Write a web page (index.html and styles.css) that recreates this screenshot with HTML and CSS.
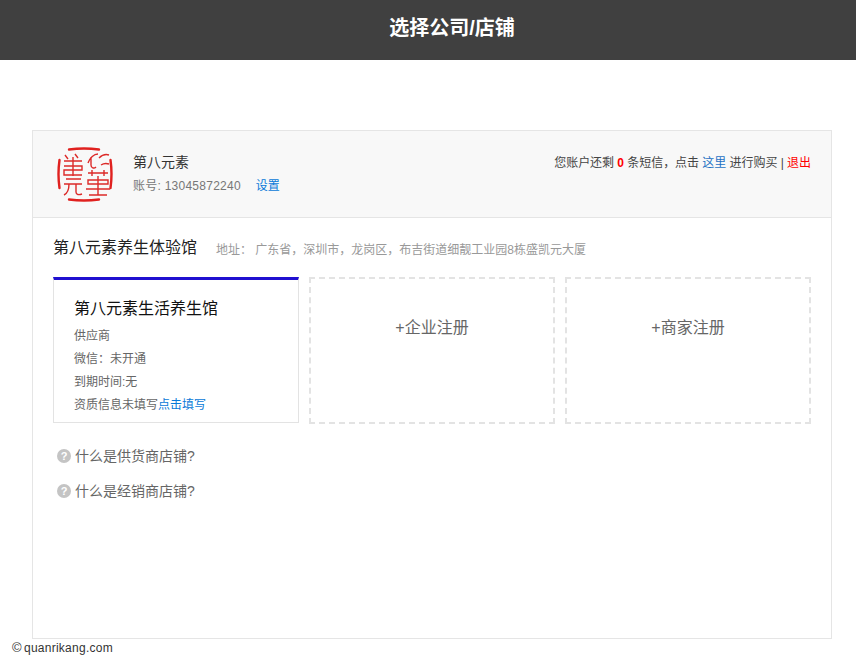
FILE: index.html
```html
<!DOCTYPE html>
<html lang="zh-CN">
<head>
<meta charset="utf-8">
<title>选择公司/店铺</title>
<link rel="stylesheet" href="styles.css">
</head>
<body>
<header class="topbar"><h1 class="topbar-title">选择公司/店铺</h1></header>
<main class="panel">
  <section class="account">
    <svg class="seal" viewBox="0 0 64 64" width="64" height="64" aria-hidden="true">
      <path class="seal-rim" d="M17 7.5Q32 5.5 47 7.5M7.5 18Q5.5 32 7.5 46M58.5 18Q60.5 32 58.5 46M17 57.5Q32 59.5 47 57.5"/>
      <path class="seal-mark" d="M13 13l3 4M23 12l3 4M12 19h18M12 24h18v4H12v5h18M21 15v19"/>
      <path class="seal-mark" d="M14 37h15M12 42h18M17 42c0 5-1 9-5 11M24 42v8c0 3 3 3 6 2"/>
      <path class="seal-mark" d="M36 21c2-5 6-9 10-9M39 15v8c0 3 3 4 5 2M47 16c3-3 7-4 10-3M49 23c3-2 5-2 8-1"/>
      <path class="seal-mark" d="M36 31h20M40 28v6M52 28v6M36 38h20v4H36zM34 47h24M46 34v19M37 53h18"/>
    </svg>
    <div class="account-info">
      <div class="account-name">第八元素</div>
      <div class="account-id">账号: 13045872240<a class="settings-link" href="#">设置</a></div>
    </div>
    <p class="sms-note">您账户还剩 <b class="sms-count">0</b> 条短信，点击 <a class="buy-link" href="#">这里</a> 进行购买 | <a class="logout-link" href="#">退出</a></p>
  </section>
  <section class="content">
    <div class="company-head">
      <h2 class="company-name">第八元素养生体验馆</h2>
      <span class="company-address">地址： 广东省，深圳市，龙岗区，布吉街道细靓工业园8栋盛凯元大厦</span>
    </div>
    <div class="cards">
      <article class="card shop-card">
        <h3 class="shop-name">第八元素生活养生馆</h3>
        <div class="shop-line">供应商</div>
        <div class="shop-line">微信：未开通</div>
        <div class="shop-line">到期时间:无</div>
        <div class="shop-line">资质信息未填写<a class="fill-link" href="#">点击填写</a></div>
      </article>
      <a class="card add-card" href="#">+企业注册</a>
      <a class="card add-card" href="#">+商家注册</a>
    </div>
    <ul class="faq">
      <li class="faq-item"><span class="faq-icon">?</span>什么是供货商店铺?</li>
      <li class="faq-item"><span class="faq-icon">?</span>什么是经销商店铺?</li>
    </ul>
  </section>
</main>
<footer class="credit"><span class="credit-mark">©</span>quanrikang.com</footer>
</body>
</html>
```
FILE: styles.css
```css
* { box-sizing: border-box; }
html, body { margin: 0; padding: 0; }
body {
  background: #fff;
  color: #333;
  font-family: "Liberation Sans", "Noto Sans CJK SC", sans-serif;
  font-size: 12px;
}
a { text-decoration: none; }

.topbar {
  height: 60px;
  background: #404040;
  display: flex;
  align-items: center;
  justify-content: center;
  padding: 0 0 4px 48px;
}
.topbar-title {
  margin: 0;
  color: #fff;
  font-size: 20px;
  font-weight: 700;
  line-height: 56px;
}

.panel {
  width: 800px;
  height: 509px;
  margin: 70px 0 0 32px;
  border: 1px solid #e5e5e5;
}

.account {
  height: 87px;
  background: #f8f8f8;
  border-bottom: 1px solid #e5e5e5;
  display: flex;
  align-items: center;
  padding: 0 20px 0 19px;
}
.seal { flex: none; }
.seal-rim { fill: none; stroke: #e0211f; stroke-width: 2.4; stroke-linecap: round; }
.seal-mark { fill: none; stroke: #dc2a28; stroke-width: 1.4; }
.account-info { margin-left: 17px; padding-top: 2px; }
.account-name { color: #333; font-size: 14px; line-height: 20px; margin-top: -2px; }
.account-id { color: #777; font-size: 12px; letter-spacing: 0.25px; line-height: 20px; margin-top: 4px; }
.settings-link { color: #0a7ad8; margin-left: 15px; letter-spacing: 0; }
.sms-note {
  margin: 0 0 0 auto;
  align-self: flex-start;
  padding-top: 23px;
  line-height: 18px;
  color: #444;
  font-size: 12px;
  letter-spacing: -0.04px;
}
.sms-count { color: #f00; }
.buy-link { color: #1f72c4; }
.logout-link { color: #f00; }

.content { padding: 0 20px; }
.company-head {
  display: flex;
  align-items: center;
  height: 59px;
}
.company-name {
  margin: 0 0 3px;
  color: #222;
  font-size: 16px;
  font-weight: 400;
}
.company-address { color: #999; font-size: 12px; margin-left: 19px; padding-top: 2px; }

.cards {
  display: grid;
  grid-template-columns: repeat(3, 246px);
  gap: 10px;
  align-items: start;
  height: 147px;
}
.card { display: block; }
.shop-card {
  height: 146px;
  border: 1px solid #e3e3e3;
  border-top: 3px solid #2010d0;
  padding: 18px 0 0 20px;
}
.shop-name {
  margin: 0 0 5px;
  color: #111;
  font-size: 16px;
  font-weight: 400;
  line-height: 22px;
}
.shop-line { color: #666; font-size: 12px; line-height: 23px; }
.fill-link { color: #0a7ad8; }
.add-card {
  height: 147px;
  border: 2px dashed #e3e3e3;
  color: #666;
  font-size: 16px;
  text-align: center;
  padding-top: 38px;
  line-height: 22px;
}

.faq { list-style: none; margin: 13px 0 0; padding: 0 0 0 4px; }
.faq-item {
  display: flex;
  align-items: center;
  height: 35px;
  color: #666;
  font-size: 14px;
}
.faq-icon {
  width: 14px;
  height: 14px;
  margin-right: 4px;
  margin-top: 2px;
  border-radius: 50%;
  background: #c4c4c4;
  color: #fff;
  font-size: 11px;
  font-weight: 700;
  line-height: 14px;
  text-align: center;
}

.credit {
  margin: 2px 0 0 12px;
  color: #333;
  font-size: 12px;
  letter-spacing: 0.25px;
  line-height: 14px;
}
.credit-mark { display: inline-block; width: 12px; font-size: 13px; letter-spacing: 0; }
```
